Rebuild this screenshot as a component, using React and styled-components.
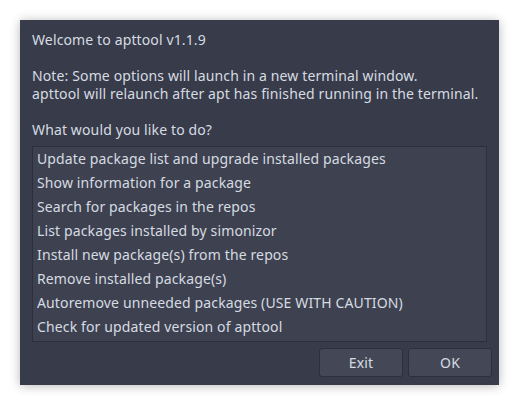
import React from "react";
import styled, { createGlobalStyle } from "styled-components";

const Global = createGlobalStyle`
  html, body { margin: 0; padding: 0; background: #ffffff; }
  body { font-family: "Noto Sans", "DejaVu Sans", sans-serif; }
`;

const Page = styled.div`
  padding: 20px;
`;

const Dialog = styled.div`
  width: 479px;
  height: 365px;
  box-sizing: border-box;
  background: #383b49;
  box-shadow: 0 1px 10px rgba(0, 0, 0, 0.28);
  padding: 11px 7px 8px 12px;
  display: flex;
  flex-direction: column;
  color: #d6dbe2;
  font-size: 14px;
  letter-spacing: 0.13px;
`;

const Message = styled.div`
  line-height: 18px;
  white-space: pre-line;
  margin-bottom: 7px;
`;

const List = styled.ul`
  list-style: none;
  margin: 0 5px 0 0;
  padding: 0;
  height: 196px;
  box-sizing: border-box;
  border: 1px solid #2d303c;
  background: #3e4250;
  display: flex;
  flex-direction: column;
`;

const Item = styled.li`
  height: 24px;
  line-height: 24px;
  padding-left: 4px;
  white-space: nowrap;
`;

const ButtonRow = styled.div`
  display: flex;
  justify-content: flex-end;
  gap: 5px;
  margin-top: 6px;
`;

const Button = styled.button`
  width: 84px;
  height: 29px;
  box-sizing: border-box;
  border: 1px solid #2d303c;
  border-radius: 3px;
  background: #444856;
  color: #d6dbe2;
  font-family: "Noto Sans", "DejaVu Sans", sans-serif;
  font-size: 14px;
  letter-spacing: 0.13px;
  padding: 0;
`;

const options = [
  "Update package list and upgrade installed packages",
  "Show information for a package",
  "Search for packages in the repos",
  "List packages installed by simonizor",
  "Install new package(s) from the repos",
  "Remove installed package(s)",
  "Autoremove unneeded packages (USE WITH CAUTION)",
  "Check for updated version of apttool",
];

export default function App() {
  return (
    <>
      <Global />
      <Page>
        <Dialog>
          <Message>
            {"Welcome to apttool v1.1.9\n\nNote: Some options will launch in a new terminal window.\napttool will relaunch after apt has finished running in the terminal.\n\nWhat would you like to do?"}
          </Message>
          <List>
            {options.map((o) => (
              <Item key={o}>{o}</Item>
            ))}
          </List>
          <ButtonRow>
            <Button>Exit</Button>
            <Button>OK</Button>
          </ButtonRow>
        </Dialog>
      </Page>
    </>
  );
}
